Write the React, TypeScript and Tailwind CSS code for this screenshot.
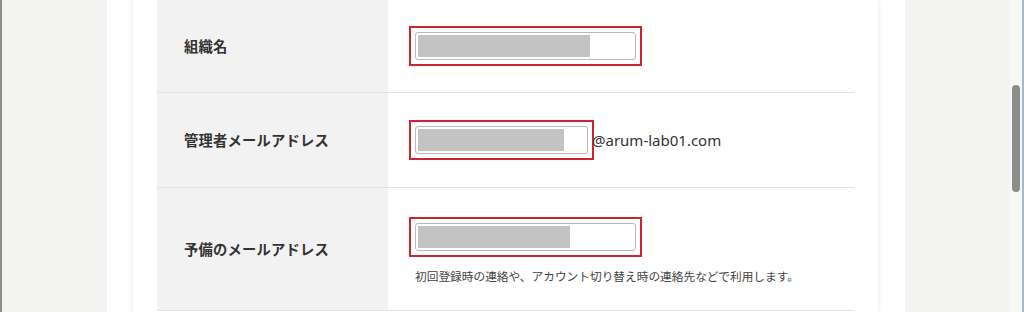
const font = { fontFamily: '"Noto Sans CJK JP", "Noto Sans", sans-serif' };

function MaskedInput({ width, fill }: { width: string; fill: string }) {
  return (
    <div className="border-2 border-[#cf2232] p-[4px] w-fit">
      <div className={`${width} h-[28px] border border-[#b9b9b9] rounded-[3px] bg-white p-[2px]`}>
        <div className={`${fill} h-full bg-[#c3c3c3]`} />
      </div>
    </div>
  );
}

function Row({
  label,
  height,
  children,
}: {
  label: string;
  height: string;
  children: React.ReactNode;
}) {
  return (
    <div className={`flex ${height} border-b border-[#e3e3e3]`}>
      <div className="w-[231px] bg-[#f2f2f2] flex items-center pl-[27px]">
        <span className="text-[14.3px] font-bold text-[#333] tracking-[0.2px]">{label}</span>
      </div>
      <div className="flex-1 bg-white flex flex-col justify-center pl-[21px]">{children}</div>
    </div>
  );
}

export default function App() {
  return (
    <div className="flex h-[312px] w-full overflow-hidden bg-[#f3f3f1]" style={font}>
      <div className="w-[2px] bg-[#8e8e8e]" />
      <div className="w-[105px] bg-[#f3f3f1]" />
      <div className="w-[798px] bg-white pl-[26px]">
        <div className="w-[745px] h-full bg-white shadow-[0_0_6px_rgba(0,0,0,0.10)] px-[24px]">
          <Row label="組織名" height="h-[93px]">
            <MaskedInput width="w-[221px]" fill="w-[172px]" />
          </Row>
          <Row label="管理者メールアドレス" height="h-[95px]">
            <div className="flex items-center">
              <MaskedInput width="w-[173px]" fill="w-[146px]" />
              <span className="-ml-[2px] text-[15px] text-[#333]" style={{ fontFamily: '"Noto Sans", sans-serif' }}>
                @arum-lab01.com
              </span>
            </div>
          </Row>
          <Row label="予備のメールアドレス" height="h-[123px]">
            <div className="pt-[4px]">
              <MaskedInput width="w-[221px]" fill="w-[152px]" />
              <p className="mt-[10px] ml-[6px] text-[11.7px] text-[#444]">
                初回登録時の連絡や、アカウント切り替え時の連絡先などで利用します。
              </p>
            </div>
          </Row>
        </div>
      </div>
      <div className="w-[105px] bg-[#f3f3f1]" />
      <div className="w-[12px] bg-[#f7f7f6] pt-[85px] flex justify-center">
        <div className="w-[8px] h-[107px] rounded-full bg-[#8c8c8c]" />
      </div>
      <div className="w-[2px] bg-[#a9b8c6]" />
    </div>
  );
}
